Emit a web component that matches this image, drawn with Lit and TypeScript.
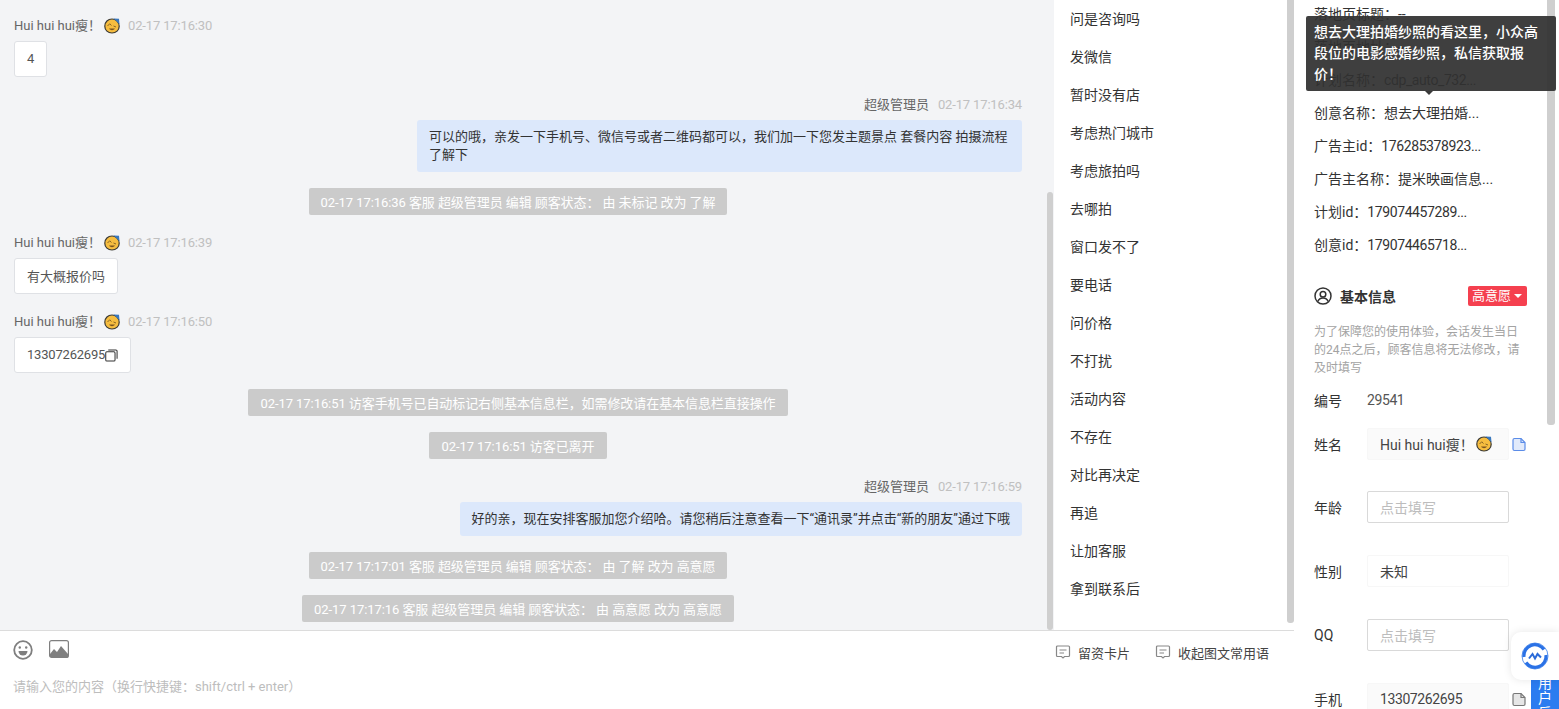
import { LitElement, html, css } from "lit";
import { customElement } from "lit/decorators.js";

const emoji = html`<svg class="emoji" viewBox="0 0 16 16" width="16" height="16">
  <path d="M8 1C4 1 .8 4 .8 8.200s3.200 6.800 7.200 6.800 7.200-2.800 7.200-6.800S12 1 8 1z" fill="#f6bd3f" stroke="#3b3a36" stroke-width="1.200"/>
  <path d="M9.500.5l5.500.3.500 5.500z" fill="#3a78bd"/>
  <path d="M3.500 8l2.200-2.200L7.500 7.500M9.500 8l2.500 1" fill="none" stroke="#7a5a20" stroke-width=".9"/>
  <path d="M5 10.500c1.500 2.300 4.500 2.300 6 0z" fill="#7a5520"/>
</svg>`;

const copyIcon = html`<svg viewBox="0 0 14 14" width="13" height="13" fill="none" stroke="#333" stroke-width="1.100"><rect x=".8" y="3" width="10" height="10" rx="1.200"/><path d="M3.500 1h8.300a1.200 1.200 0 0 1 1.200 1.200v8.300"/></svg>`;

const fileIcon = (c: string) => html`<svg class="file" viewBox="0 0 14 15" width="14" height="15" fill="none" stroke="${c}" stroke-width="1.200"><path d="M1 3a1.500 1.500 0 0 1 1.500-1.500H9l4 4V12a1.500 1.500 0 0 1-1.500 1.500h-9A1.500 1.500 0 0 1 1 12z" fill="${c}" fill-opacity=".18"/><path d="M9 1.500V5.500h4"/></svg>`;

const chatIcon = html`<svg viewBox="0 0 16 16" width="16" height="16" fill="none" stroke="#888" stroke-width="1.200"><path d="M2.500 2h11A1 1 0 0 1 14.500 3v8.500a1 1 0 0 1-1 1H9.500L8 14l-1.500-1.500h-4a1 1 0 0 1-1-1V3a1 1 0 0 1 1-1z"/><path d="M4.500 6h7M4.500 9h4.500"/></svg>`;

const phrases = ["问是咨询吗","发微信","暂时没有店","考虑热门城市","考虑旅拍吗","去哪拍","窗口发不了","要电话","问价格","不打扰","活动内容","不存在","对比再决定","再追","让加客服","拿到联系后"];
const infos: [string, string, boolean][] = [
  ["计划名称：", "cdp_auto_732...", true],
  ["创意名称：", "想去大理拍婚...", false],
  ["广告主id：", "176285378923...", true],
  ["广告主名称：", "提米映画信息...", false],
  ["计划id：", "179074457289...", true],
  ["创意id：", "179074465718...", true],
];

@customElement("app-root")
export class AppRoot extends LitElement {
  static styles = css`
    :host { display: block; width: 1559px; height: 709px; overflow: hidden; position: relative; background: #fff;
      font-family: Roboto, "Noto Sans CJK SC", sans-serif; font-size: 13px; color: #333; }
    * { box-sizing: border-box; }
    .page { display: grid; grid-template-columns: 1294px 265px; height: 709px; }
    .main { display: flex; flex-direction: column; height: 709px; min-width: 0; }
    .top { display: flex; height: 631px; border-bottom: 1px solid #dcdcdc; }
    .chat { width: 1046px; background: #f3f4f6; padding: 16px 24px 0 14px; display: flex; flex-direction: column; overflow: hidden; }
    .track1 { width: 8px; background: #f3f4f6; padding: 192px 1px 0; }
    .track1 i { display: block; height: 438px; background: #cfcfcf; border-radius: 3px; }
    .left { margin-bottom: 18px; display: flex; flex-direction: column; align-items: flex-start; }
    .left.last { margin-bottom: 16px; }
    .right { margin-bottom: 16px; display: flex; flex-direction: column; align-items: flex-end; }
    .meta { height: 18px; padding-top: 2px; line-height: 16px; display: flex; align-items: center; color: #666; margin-bottom: 7px; white-space: nowrap; }
    .meta .emoji { margin: 0 8px 0 3px; }
    .time { color: #c0c0c0; letter-spacing: -.15px; }
    .right .time { margin-left: 9px; }
    .bubble { background: #fff; border: 1px solid #dfe1e5; border-radius: 3px; padding: 8px 12px; line-height: 18px; color: #555; display: flex; align-items: center; }
    .bubble.cjk { padding: 9px 12px 7px; }
    .bubble.num { letter-spacing: -.2px; }
    .blue { background: #dce8fb; color: #333; padding: 8px 12px; border-radius: 3px; line-height: 18px; max-width: 605px; }
    .sys { align-self: center; background: #cbcbcb; color: #fff; height: 27px; line-height: 29px; padding: 0 12px; border-radius: 2px; margin: 0 0 16px; white-space: nowrap; letter-spacing: -.07px; }
    .sys.after { margin-bottom: 18px; }
    .phr { width: 233px; background: #fff; font-size: 14px; }
    .phr div { height: 38px; line-height: 38px; padding-left: 16px; color: #333; }
    .track2 { width: 7px; background: #fff; }
    .track2 i { display: block; height: 623px; background: #cfcfcf; border-radius: 0 0 3px 3px; }
    .input { flex: 1; position: relative; padding: 9px 13px 0; }
    .tools { display: flex; justify-content: space-between; align-items: flex-start; }
    .ticons { display: flex; gap: 16px; align-items: flex-start; }
    .acts { display: flex; gap: 25px; padding: 3px 12px 0 0; color: #444; }
    .acts span { display: flex; align-items: center; gap: 7px; height: 18px; }
    .ph { color: #bdbdbd; margin-top: 17px; line-height: 18px; }
    .side { position: relative; background: #fff; display: grid; grid-template-columns: 253px 8px 4px; height: 709px; }
    .panel { padding: 0 0 0 20px; height: 709px; overflow: hidden; color: #333; font-size: 14px; }
    .track3 i { display: block; height: 425px; background: #cfcfcf; border-radius: 0 0 3px 3px; }
    .line { height: 33px; line-height: 33px; white-space: nowrap; }
    .first { margin-top: -2px; }
    .num { letter-spacing: -.4px; }
    .head { display: flex; align-items: center; margin-top: 21px; height: 26px; padding-right: 20px; }
    .head b { font-weight: 700; margin-left: 8px; flex: 1; }
    .tag { background: #f5404f; color: #fff; border-radius: 2px; height: 20px; line-height: 20px; padding: 0 5px 0 4px; display: flex; align-items: center; gap: 3px; font-size: 13px; }
    .tag i { border: 4px solid transparent; border-top-color: #fff; border-bottom: 0; width: 0; height: 0; display: block; }
    .note { color: #a3a3a3; font-size: 12px; line-height: 18px; margin-top: 14px; width: 214px; }
    .row { display: flex; align-items: center; }
    .row label { width: 53px; color: #333; }
    .id { height: 32px; margin-top: 7px; }
    .id span { color: #555; }
    .mt12 { margin-top: 12px; }
    .mt31 { margin-top: 31px; }
    .mt32 { margin-top: 32px; }
    .field { width: 142px; height: 32px; padding: 0 12px; border-radius: 2px; border: 1px solid #f7f7f7; background: #fafafa; color: #444; display: flex; align-items: center; white-space: nowrap; }
    .field.white { background: #fff; }
    .field.edit { background: #fff; border-color: #d9d9d9; color: #bdbdbd; }
    .field .emoji { margin-left: 2px; flex: none; }
    .row .file { margin-left: 3px; }
    .tip { position: absolute; left: 12px; top: 16px; width: 250px; height: 75px; background: rgba(48,48,48,.93); border-radius: 2px; color: #fff; font-weight: 500; font-size: 14px; line-height: 21px; padding: 6px 8px; z-index: 3; }
    .tip::after { content: ""; position: absolute; left: 119px; bottom: -4px; border: 4px solid transparent; border-top-color: #3a3a3a; border-bottom: 0; }
    .widget { position: absolute; right: 0; top: 632px; width: 48px; height: 48px; background: #fff; border-radius: 10px 0 0 10px; box-shadow: 0 0 8px rgba(0,0,0,.1); display: flex; align-items: center; justify-content: center; z-index: 5; }
    .user { position: absolute; right: 0; top: 676px; width: 28px; height: 33px; overflow: hidden; background: #2b7cf0; color: #fff; font-size: 14px; line-height: 15px; text-align: center; z-index: 4; padding: 0 7px; }
  `;

  meta(t: string) {
    return html`<div class="meta">Hui hui hui瘦！${emoji}<span class="time">${t}</span></div>`;
  }
  rmeta(t: string) {
    return html`<div class="meta">超级管理员<span class="time">${t}</span></div>`;
  }

  render() {
    return html`<div class="page">
      <div class="main">
        <div class="top">
          <div class="chat">
            <div class="left">${this.meta("02-17 17:16:30")}<div class="bubble">4</div></div>
            <div class="right">${this.rmeta("02-17 17:16:34")}<div class="blue">可以的哦，亲发一下手机号、微信号或者二维码都可以，我们加一下您发主题景点 套餐内容 拍摄流程了解下</div></div>
            <div class="sys after">02-17 17:16:36 客服 超级管理员 编辑 顾客状态： 由 未标记 改为 了解</div>
            <div class="left">${this.meta("02-17 17:16:39")}<div class="bubble cjk">有大概报价吗</div></div>
            <div class="left last">${this.meta("02-17 17:16:50")}<div class="bubble num">13307262695${copyIcon}</div></div>
            <div class="sys">02-17 17:16:51 访客手机号已自动标记右侧基本信息栏，如需修改请在基本信息栏直接操作</div>
            <div class="sys after">02-17 17:16:51 访客已离开</div>
            <div class="right">${this.rmeta("02-17 17:16:59")}<div class="blue">好的亲，现在安排客服加您介绍哈。请您稍后注意查看一下“通讯录”并点击“新的朋友”通过下哦</div></div>
            <div class="sys">02-17 17:17:01 客服 超级管理员 编辑 顾客状态： 由 了解 改为 高意愿</div>
            <div class="sys">02-17 17:17:16 客服 超级管理员 编辑 顾客状态： 由 高意愿 改为 高意愿</div>
          </div>
          <div class="track1"><i></i></div>
          <div class="phr">${phrases.map((p) => html`<div>${p}</div>`)}</div>
          <div class="track2"><i></i></div>
        </div>
        <div class="input">
          <div class="tools">
            <div class="ticons">
              <svg viewBox="0 0 20 20" width="20" height="20" fill="none" stroke="#7f7f7f" stroke-width="1.800"><circle cx="10" cy="10" r="8.800"/><circle cx="6.800" cy="7.500" r="1.200" fill="#7f7f7f" stroke="none"/><circle cx="13.200" cy="7.500" r="1.200" fill="#7f7f7f" stroke="none"/><path d="M5.500 11h9a4.500 4.500 0 0 1-9 0z" fill="#7f7f7f" stroke="none"/></svg>
              <svg viewBox="0 0 20 18" width="20" height="18"><rect x=".6" y=".6" width="18.800" height="16.800" rx="2" fill="#fff" stroke="#7f7f7f" stroke-width="1.200"/><path d="M1 17v-3l4-5 3 3 4-6 7 8v3z" fill="#7f7f7f"/></svg>
            </div>
            <div class="acts"><span>${chatIcon}留资卡片</span><span>${chatIcon}收起图文常用语</span></div>
          </div>
          <div class="ph">请输入您的内容（换行快捷键：shift/ctrl + enter）</div>
        </div>
      </div>
      <div class="side">
        <div class="panel">
          <div class="line first">落地页标题：--</div>
          <div class="line">落地页地址：--</div>
          ${infos.map(([a, b, n]) => html`<div class="line">${a}<span class=${n ? "num" : ""}>${b}</span></div>`)}
          <div class="head">
            <svg viewBox="0 0 18 18" width="18" height="18" fill="none" stroke="#333" stroke-width="1.500"><circle cx="9" cy="9" r="8"/><circle cx="9" cy="7.300" r="2.800"/><path d="M3.800 14.500c1-2.500 3-3.500 5.200-3.500s4.200 1 5.200 3.500"/></svg>
            <b>基本信息</b>
            <span class="tag">高意愿<i></i></span>
          </div>
          <div class="note">为了保障您的使用体验，会话发生当日的24点之后，顾客信息将无法修改，请及时填写</div>
          <div class="row id"><label>编号</label><span class="num">29541</span></div>
          <div class="row mt12"><label>姓名</label><div class="field">Hui hui hui瘦！${emoji}</div>${fileIcon("#5b8ce8")}</div>
          <div class="row mt31"><label>年龄</label><div class="field edit">点击填写</div></div>
          <div class="row mt32"><label>性别</label><div class="field white">未知</div></div>
          <div class="row mt32"><label>QQ</label><div class="field edit">点击填写</div></div>
          <div class="row mt32"><label>手机</label><div class="field num">13307262695</div>${fileIcon("#777")}</div>
        </div>
        <div class="track3"><i></i></div>
        <div class="tip">想去大理拍婚纱照的看这里，小众高段位的电影感婚纱照，私信获取报价！</div>
      </div>
    </div>
    <div class="widget">
      <svg viewBox="0 0 28 28" width="28" height="28" fill="none"><circle cx="14" cy="14" r="13" fill="#fff" stroke="#5d96ee" stroke-width="1"/><path d="M3 15A11 11 0 0 1 23 7.500" stroke="#2b72e6" stroke-width="3.200"/><path d="M25 13A11 11 0 0 1 5 20.500" stroke="#2b72e6" stroke-width="3.200"/><path d="M8 16.500l3.500-4.500 2.500 4.500 2.500-4.500 3.500 3.500" stroke="#2a6ad8" stroke-width="2"/></svg>
    </div>
    <div class="user">用户反馈</div>`;
  }
}
